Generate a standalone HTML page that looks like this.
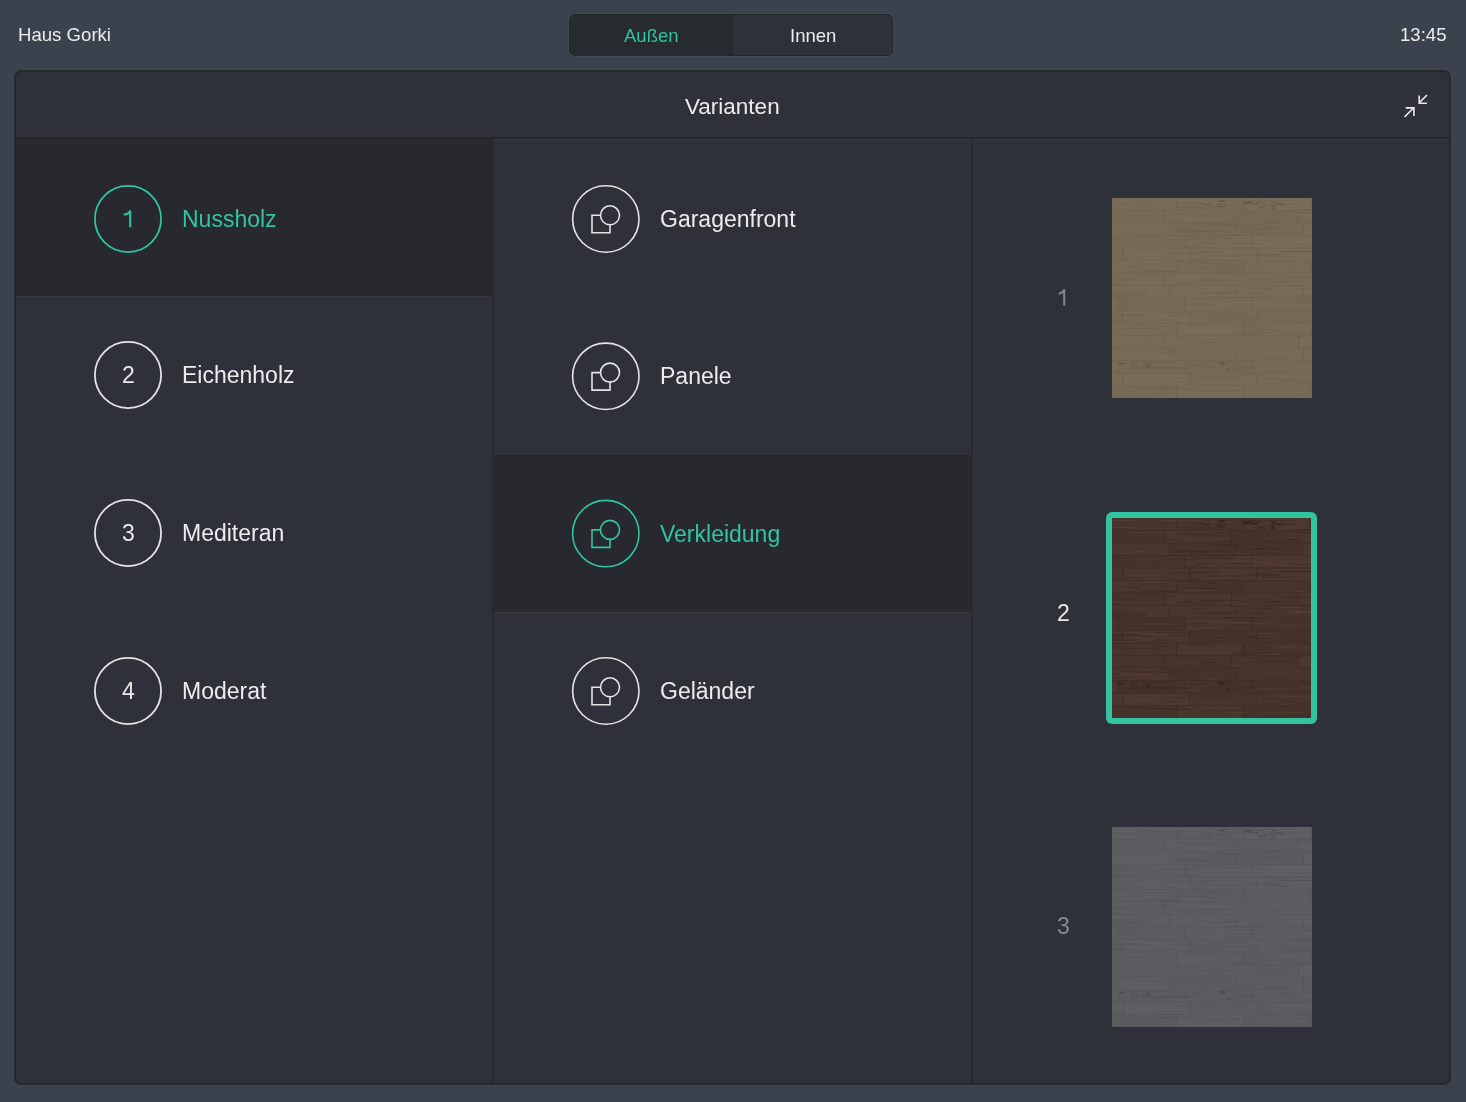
<!DOCTYPE html>
<html><head><meta charset="utf-8">
<style>
*{box-sizing:border-box;margin:0;padding:0}
html,body{width:1466px;height:1102px;overflow:hidden}
body{background:#3c424d;font-family:"Liberation Sans",sans-serif;color:#ececec;position:relative}
.a{position:absolute}
.t{position:absolute;white-space:nowrap;line-height:1;will-change:transform}
#title{left:18px;top:25.5px;font-size:18.6px}
#clock{left:1400px;top:25.5px;font-size:18.6px}
#seg{left:569px;top:14px;width:324px;height:42px;border:1.5px solid #23262a;border-radius:6px;background:#2d3139;overflow:hidden;box-shadow:0 0 0 1px #414856}
#seg .l{left:0;top:0;width:163px;height:100%;background:#272a2f;border-right:1px solid #23262a}
#panel{left:14px;top:70px;width:1437px;height:1015px;border:2px solid #25282c;border-radius:7px;background:#2e313a;box-shadow:0 0 0 1px #3f4552}
.dk{background:#24272b}
.lt{background:#383b44}
.sel{background:#27292e}
.circ{position:absolute;width:68px;height:68px;border-radius:50%;border:1.7px solid #e4e4e4}
.circ.g{border-color:#32c4a1}
.lab{position:absolute;will-change:transform;font-size:23px;line-height:1;white-space:nowrap}
.g{color:#32c4a1}
.num{position:absolute;will-change:transform;font-size:23px;line-height:1;white-space:nowrap;color:#e8e8e8}
.ic{position:absolute;left:0;top:0;overflow:visible}
.num.g{color:#32c4a1}
</style></head><body>
<div class="t" id="title">Haus Gorki</div>
<div class="a" id="seg"><div class="a l"></div>
<div class="t g" style="left:54px;top:12px;font-size:18.5px">Außen</div>
<div class="t" style="left:220px;top:12px;font-size:18.5px">Innen</div>
</div>
<div class="t" id="clock">13:45</div>

<div class="a" id="panel"></div>
<!-- header -->
<div class="t" style="left:684.5px;top:95.5px;font-size:22.5px">Varianten</div>
<div class="a dk" style="left:16px;top:137px;width:1433px;height:2px"></div>

<!-- column 1 -->
<div class="a sel" style="left:16px;top:139px;width:476px;height:157px"></div>
<div class="a lt" style="left:16px;top:296px;width:476px;height:1px"></div>
<!-- column separators -->
<div class="a" style="left:492px;top:139px;width:2px;height:944px;background:linear-gradient(90deg,#23262a 50%,#2a2d32 50%)"></div>
<div class="a" style="left:971px;top:139px;width:2px;height:944px;background:linear-gradient(90deg,#23262a 50%,#2a2d32 50%)"></div>
<!-- top highlight col2/3 -->
<div class="a lt" style="left:494px;top:139px;width:477px;height:1px"></div>
<div class="a lt" style="left:973px;top:139px;width:476px;height:1px"></div>
<!-- column 2 selected row -->
<div class="a sel" style="left:494px;top:455px;width:477px;height:157px"></div>
<div class="a" style="left:494px;top:455px;width:477px;height:1px;background:#23262a"></div>
<div class="a lt" style="left:494px;top:612px;width:477px;height:1px"></div>

<!-- col1 items -->
<div class="lab g" style="left:182px;top:208px">Nussholz</div>

<div class="num" style="left:121.5px;top:364px">2</div>
<div class="lab" style="left:182px;top:364px">Eichenholz</div>

<div class="num" style="left:121.5px;top:522px">3</div>
<div class="lab" style="left:182px;top:522px">Mediteran</div>

<div class="num" style="left:121.5px;top:680px">4</div>
<div class="lab" style="left:182px;top:680px">Moderat</div>

<!-- col2 items -->
<svg class="ic" width="1466" height="1102" viewBox="0 0 1466 1102">
  <g fill="none" stroke="#e4e4e4" stroke-width="1.8">
    <circle cx="128" cy="375" r="33.1"/>
    <circle cx="128" cy="533" r="33.1"/>
    <circle cx="128" cy="691" r="33.1"/>
  </g>
  <circle cx="128" cy="219" r="33.1" fill="none" stroke="#32c4a1" stroke-width="1.8"/>
  <path d="M130.2 227.3V210.3M130.2 210.6C129.4 213.2 127.3 214.4 123.8 214.6" fill="none" stroke="#32c4a1" stroke-width="2"/>
  <path d="M1064.2 305.6V289.2M1064.2 289.5C1063.4 292.1 1061.8 293.3 1058.7 293.5" fill="none" stroke="#86898e" stroke-width="2"/>
  <g fill="none" stroke="#e4e4e4" stroke-width="1.6">
    <circle cx="605.8" cy="219" r="33.2"/>
    <path d="M600.5 215.3H592V232.8H610V224.8"/><circle cx="610" cy="215.3" r="9.5"/>
    <circle cx="605.8" cy="376.3" r="33.2"/>
    <path d="M600.5 372.6H592V390.1H610V382.1"/><circle cx="610" cy="372.6" r="9.5"/>
    <circle cx="605.8" cy="691" r="33.2"/>
    <path d="M600.5 687.3H592V704.8H610V696.8"/><circle cx="610" cy="687.3" r="9.5"/>
  </g>
  <g fill="none" stroke="#32c4a1" stroke-width="1.6">
    <circle cx="605.8" cy="533.6" r="33.2"/>
    <path d="M600.5 529.9H592V547.4H610V539.4"/><circle cx="610" cy="529.9" r="9.5"/>
  </g>
  <g fill="none" stroke="#ececec" stroke-width="1.6" stroke-linecap="butt">
    <path d="M1427 95L1419.2 102.8M1419.2 95.5V103.3H1427"/>
    <path d="M1404.5 117L1413.5 108M1405.7 107.9H1413.9V116"/>
  </g>
</svg>
<div class="lab" style="left:660px;top:208px">Garagenfront</div>
<div class="lab" style="left:660px;top:365px">Panele</div>
<div class="lab g" style="left:660px;top:523px">Verkleidung</div>
<div class="lab" style="left:660px;top:680px">Geländer</div>

<!-- col3 swatches -->
<div class="num" style="left:1057px;top:602px">2</div>
<div class="num" style="left:1057px;top:915px;color:#86898e">3</div>

<svg width="0" height="0" style="position:absolute"><defs><filter id="bl"><feGaussianBlur stdDeviation="0.35"/></filter><g id="wood" filter="url(#bl)"><rect x="0.0" y="0.0" width="65.0" height="12.5" fill="#000" fill-opacity="0.002"/><rect x="65.0" y="0.0" width="67.0" height="12.5" fill="#fff" fill-opacity="0.001"/><rect x="132.0" y="0.0" width="67.0" height="12.5" fill="#fff" fill-opacity="0.010"/><rect x="199.0" y="0.0" width="1.0" height="12.5" fill="#000" fill-opacity="0.001"/><rect x="64.5" y="0.0" width="1" height="12.5" fill="#000" fill-opacity="0.07"/><rect x="131.5" y="0.0" width="1" height="12.5" fill="#000" fill-opacity="0.07"/><rect x="198.5" y="0.0" width="1" height="12.5" fill="#000" fill-opacity="0.07"/><rect x="103.4" y="6.3" width="14.8" height="0.8" fill="#000" fill-opacity="0.06"/><rect x="146.5" y="7.6" width="11.5" height="0.8" fill="#000" fill-opacity="0.05"/><rect x="150.0" y="2.0" width="33.7" height="0.8" fill="#000" fill-opacity="0.03"/><rect x="182.6" y="11.3" width="32.2" height="0.8" fill="#000" fill-opacity="0.06"/><rect x="-16.8" y="2.7" width="27.6" height="0.8" fill="#000" fill-opacity="0.03"/><rect x="30.8" y="3.0" width="9.1" height="0.8" fill="#000" fill-opacity="0.05"/><rect x="156.9" y="5.6" width="27.2" height="0.8" fill="#000" fill-opacity="0.06"/><rect x="119.1" y="6.2" width="24.9" height="0.8" fill="#000" fill-opacity="0.04"/><rect x="189.1" y="11.5" width="39.1" height="0.8" fill="#000" fill-opacity="0.07"/><rect x="28.2" y="4.3" width="18.7" height="0.8" fill="#000" fill-opacity="0.03"/><rect x="64.1" y="9.0" width="39.3" height="0.8" fill="#000" fill-opacity="0.05"/><rect x="157.9" y="11.1" width="8.0" height="0.8" fill="#000" fill-opacity="0.04"/><rect x="78.7" y="10.6" width="44.3" height="0.8" fill="#000" fill-opacity="0.05"/><rect x="112.2" y="1.8" width="36.8" height="0.8" fill="#000" fill-opacity="0.04"/><rect x="49.8" y="1.9" width="38.9" height="0.8" fill="#fff" fill-opacity="0.03"/><rect x="4.8" y="9.0" width="15.9" height="0.8" fill="#fff" fill-opacity="0.03"/><rect x="-7.4" y="2.1" width="33.5" height="0.8" fill="#fff" fill-opacity="0.03"/><rect x="97.5" y="2.9" width="22.3" height="0.8" fill="#fff" fill-opacity="0.03"/><rect x="0.0" y="12.5" width="53.0" height="12.5" fill="#000" fill-opacity="0.012"/><rect x="53.0" y="12.5" width="67.0" height="12.5" fill="#fff" fill-opacity="0.006"/><rect x="120.0" y="12.5" width="67.0" height="12.5" fill="#000" fill-opacity="0.015"/><rect x="187.0" y="12.5" width="13.0" height="12.5" fill="#fff" fill-opacity="0.003"/><rect x="0" y="12.0" width="200" height="1" fill="#000" fill-opacity="0.05"/><rect x="52.5" y="12.5" width="1" height="12.5" fill="#000" fill-opacity="0.07"/><rect x="119.5" y="12.5" width="1" height="12.5" fill="#000" fill-opacity="0.07"/><rect x="186.5" y="12.5" width="1" height="12.5" fill="#000" fill-opacity="0.07"/><rect x="68.4" y="14.7" width="15.9" height="0.8" fill="#000" fill-opacity="0.04"/><rect x="148.7" y="23.7" width="19.3" height="0.8" fill="#000" fill-opacity="0.07"/><rect x="62.8" y="15.7" width="39.6" height="0.8" fill="#000" fill-opacity="0.06"/><rect x="187.8" y="14.6" width="15.9" height="0.8" fill="#000" fill-opacity="0.04"/><rect x="49.1" y="21.6" width="19.0" height="0.8" fill="#000" fill-opacity="0.03"/><rect x="102.4" y="14.4" width="17.0" height="0.8" fill="#000" fill-opacity="0.06"/><rect x="75.2" y="17.4" width="43.5" height="0.8" fill="#000" fill-opacity="0.05"/><rect x="162.0" y="19.5" width="14.8" height="0.8" fill="#000" fill-opacity="0.04"/><rect x="151.7" y="23.0" width="17.2" height="0.8" fill="#000" fill-opacity="0.04"/><rect x="177.5" y="21.3" width="15.3" height="0.8" fill="#000" fill-opacity="0.08"/><rect x="106.7" y="22.8" width="23.6" height="0.8" fill="#000" fill-opacity="0.04"/><rect x="182.2" y="13.9" width="16.8" height="0.8" fill="#000" fill-opacity="0.07"/><rect x="153.0" y="16.2" width="30.1" height="0.8" fill="#000" fill-opacity="0.04"/><rect x="131.3" y="15.3" width="10.5" height="0.8" fill="#000" fill-opacity="0.04"/><rect x="159.0" y="19.4" width="27.7" height="0.8" fill="#fff" fill-opacity="0.03"/><rect x="172.6" y="16.4" width="14.5" height="0.8" fill="#fff" fill-opacity="0.03"/><rect x="36.5" y="13.7" width="22.3" height="0.8" fill="#fff" fill-opacity="0.03"/><rect x="17.0" y="14.1" width="19.8" height="0.8" fill="#fff" fill-opacity="0.03"/><rect x="0.0" y="25.0" width="57.5" height="12.5" fill="#fff" fill-opacity="0.002"/><rect x="57.5" y="25.0" width="67.0" height="12.5" fill="#000" fill-opacity="0.015"/><rect x="124.5" y="25.0" width="67.0" height="12.5" fill="#000" fill-opacity="0.006"/><rect x="191.5" y="25.0" width="8.5" height="12.5" fill="#fff" fill-opacity="0.009"/><rect x="0" y="24.5" width="200" height="1" fill="#000" fill-opacity="0.05"/><rect x="57.0" y="25.0" width="1" height="12.5" fill="#000" fill-opacity="0.07"/><rect x="124.0" y="25.0" width="1" height="12.5" fill="#000" fill-opacity="0.07"/><rect x="191.0" y="25.0" width="1" height="12.5" fill="#000" fill-opacity="0.07"/><rect x="118.0" y="36.3" width="33.6" height="0.8" fill="#000" fill-opacity="0.06"/><rect x="-12.6" y="27.5" width="8.7" height="0.8" fill="#000" fill-opacity="0.08"/><rect x="182.2" y="33.4" width="8.8" height="0.8" fill="#000" fill-opacity="0.06"/><rect x="133.4" y="31.1" width="19.8" height="0.8" fill="#000" fill-opacity="0.08"/><rect x="94.7" y="26.8" width="35.3" height="0.8" fill="#000" fill-opacity="0.08"/><rect x="127.8" y="33.7" width="37.4" height="0.8" fill="#000" fill-opacity="0.08"/><rect x="123.9" y="29.7" width="41.3" height="0.8" fill="#000" fill-opacity="0.07"/><rect x="146.0" y="30.4" width="39.9" height="0.8" fill="#000" fill-opacity="0.06"/><rect x="60.3" y="32.6" width="29.6" height="0.8" fill="#000" fill-opacity="0.06"/><rect x="114.3" y="26.8" width="44.8" height="0.8" fill="#000" fill-opacity="0.07"/><rect x="61.6" y="33.6" width="35.2" height="0.8" fill="#000" fill-opacity="0.06"/><rect x="156.1" y="30.6" width="11.1" height="0.8" fill="#000" fill-opacity="0.07"/><rect x="106.3" y="26.3" width="25.8" height="0.8" fill="#000" fill-opacity="0.04"/><rect x="84.4" y="33.3" width="30.7" height="0.8" fill="#000" fill-opacity="0.08"/><rect x="-17.6" y="28.7" width="17.6" height="0.8" fill="#fff" fill-opacity="0.03"/><rect x="22.5" y="33.1" width="13.4" height="0.8" fill="#fff" fill-opacity="0.03"/><rect x="118.6" y="35.5" width="22.1" height="0.8" fill="#fff" fill-opacity="0.03"/><rect x="48.7" y="35.4" width="29.3" height="0.8" fill="#fff" fill-opacity="0.03"/><rect x="0.0" y="37.5" width="6.3" height="12.5" fill="#000" fill-opacity="0.012"/><rect x="6.3" y="37.5" width="67.0" height="12.5" fill="#000" fill-opacity="0.003"/><rect x="73.3" y="37.5" width="67.0" height="12.5" fill="#fff" fill-opacity="0.007"/><rect x="140.3" y="37.5" width="59.7" height="12.5" fill="#fff" fill-opacity="0.010"/><rect x="0" y="37.0" width="200" height="1" fill="#000" fill-opacity="0.05"/><rect x="5.8" y="37.5" width="1" height="12.5" fill="#000" fill-opacity="0.07"/><rect x="72.8" y="37.5" width="1" height="12.5" fill="#000" fill-opacity="0.07"/><rect x="139.8" y="37.5" width="1" height="12.5" fill="#000" fill-opacity="0.07"/><rect x="60.7" y="47.7" width="29.6" height="0.8" fill="#000" fill-opacity="0.05"/><rect x="84.3" y="39.9" width="39.0" height="0.8" fill="#000" fill-opacity="0.07"/><rect x="179.5" y="46.0" width="18.2" height="0.8" fill="#000" fill-opacity="0.04"/><rect x="37.8" y="43.2" width="15.9" height="0.8" fill="#000" fill-opacity="0.05"/><rect x="83.7" y="45.1" width="19.7" height="0.8" fill="#000" fill-opacity="0.07"/><rect x="75.0" y="48.8" width="10.8" height="0.8" fill="#000" fill-opacity="0.03"/><rect x="-11.3" y="47.7" width="34.2" height="0.8" fill="#000" fill-opacity="0.06"/><rect x="146.2" y="41.7" width="8.7" height="0.8" fill="#000" fill-opacity="0.04"/><rect x="-14.8" y="43.3" width="38.7" height="0.8" fill="#000" fill-opacity="0.04"/><rect x="-10.1" y="40.0" width="31.3" height="0.8" fill="#000" fill-opacity="0.05"/><rect x="117.6" y="45.1" width="37.9" height="0.8" fill="#000" fill-opacity="0.08"/><rect x="21.9" y="45.7" width="25.6" height="0.8" fill="#000" fill-opacity="0.04"/><rect x="79.2" y="38.6" width="34.4" height="0.8" fill="#000" fill-opacity="0.04"/><rect x="52.6" y="41.4" width="33.8" height="0.8" fill="#000" fill-opacity="0.06"/><rect x="138.8" y="45.0" width="20.6" height="0.8" fill="#fff" fill-opacity="0.03"/><rect x="170.3" y="46.8" width="10.8" height="0.8" fill="#fff" fill-opacity="0.03"/><rect x="131.7" y="48.3" width="12.2" height="0.8" fill="#fff" fill-opacity="0.03"/><rect x="111.4" y="43.3" width="37.1" height="0.8" fill="#fff" fill-opacity="0.03"/><rect x="0.0" y="50.0" width="11.0" height="12.5" fill="#000" fill-opacity="0.005"/><rect x="11.0" y="50.0" width="67.0" height="12.5" fill="#fff" fill-opacity="0.002"/><rect x="78.0" y="50.0" width="67.0" height="12.5" fill="#fff" fill-opacity="0.009"/><rect x="145.0" y="50.0" width="55.0" height="12.5" fill="#fff" fill-opacity="0.007"/><rect x="0" y="49.5" width="200" height="1" fill="#000" fill-opacity="0.05"/><rect x="10.5" y="50.0" width="1" height="12.5" fill="#000" fill-opacity="0.07"/><rect x="77.5" y="50.0" width="1" height="12.5" fill="#000" fill-opacity="0.07"/><rect x="144.5" y="50.0" width="1" height="12.5" fill="#000" fill-opacity="0.07"/><rect x="77.4" y="60.9" width="32.1" height="0.8" fill="#000" fill-opacity="0.04"/><rect x="151.9" y="58.6" width="31.7" height="0.8" fill="#000" fill-opacity="0.07"/><rect x="169.0" y="53.2" width="44.3" height="0.8" fill="#000" fill-opacity="0.08"/><rect x="146.1" y="56.6" width="19.9" height="0.8" fill="#000" fill-opacity="0.08"/><rect x="53.2" y="60.0" width="11.1" height="0.8" fill="#000" fill-opacity="0.05"/><rect x="141.3" y="56.8" width="26.0" height="0.8" fill="#000" fill-opacity="0.03"/><rect x="-6.5" y="59.5" width="37.6" height="0.8" fill="#000" fill-opacity="0.04"/><rect x="145.5" y="54.5" width="13.2" height="0.8" fill="#000" fill-opacity="0.04"/><rect x="131.9" y="56.4" width="39.1" height="0.8" fill="#000" fill-opacity="0.06"/><rect x="83.4" y="60.9" width="43.1" height="0.8" fill="#000" fill-opacity="0.03"/><rect x="90.6" y="53.3" width="18.7" height="0.8" fill="#000" fill-opacity="0.07"/><rect x="89.8" y="57.7" width="39.2" height="0.8" fill="#000" fill-opacity="0.06"/><rect x="60.1" y="54.3" width="39.3" height="0.8" fill="#000" fill-opacity="0.08"/><rect x="158.7" y="53.2" width="43.8" height="0.8" fill="#000" fill-opacity="0.06"/><rect x="22.2" y="57.0" width="25.1" height="0.8" fill="#fff" fill-opacity="0.03"/><rect x="107.1" y="56.3" width="8.9" height="0.8" fill="#fff" fill-opacity="0.03"/><rect x="88.4" y="61.2" width="20.8" height="0.8" fill="#fff" fill-opacity="0.03"/><rect x="98.2" y="59.4" width="23.7" height="0.8" fill="#fff" fill-opacity="0.03"/><rect x="0.0" y="62.5" width="65.0" height="12.5" fill="#fff" fill-opacity="0.005"/><rect x="65.0" y="62.5" width="67.0" height="12.5" fill="#000" fill-opacity="0.017"/><rect x="132.0" y="62.5" width="67.0" height="12.5" fill="#fff" fill-opacity="0.001"/><rect x="199.0" y="62.5" width="1.0" height="12.5" fill="#000" fill-opacity="0.003"/><rect x="0" y="62.0" width="200" height="1" fill="#000" fill-opacity="0.05"/><rect x="64.5" y="62.5" width="1" height="12.5" fill="#000" fill-opacity="0.07"/><rect x="131.5" y="62.5" width="1" height="12.5" fill="#000" fill-opacity="0.07"/><rect x="198.5" y="62.5" width="1" height="12.5" fill="#000" fill-opacity="0.07"/><rect x="173.9" y="73.5" width="18.0" height="0.8" fill="#000" fill-opacity="0.05"/><rect x="71.1" y="64.8" width="38.2" height="0.8" fill="#000" fill-opacity="0.08"/><rect x="46.6" y="68.5" width="15.1" height="0.8" fill="#000" fill-opacity="0.06"/><rect x="7.2" y="73.2" width="36.8" height="0.8" fill="#000" fill-opacity="0.03"/><rect x="27.7" y="65.5" width="33.4" height="0.8" fill="#000" fill-opacity="0.05"/><rect x="110.2" y="67.2" width="11.9" height="0.8" fill="#000" fill-opacity="0.07"/><rect x="87.2" y="64.8" width="17.3" height="0.8" fill="#000" fill-opacity="0.04"/><rect x="71.7" y="69.1" width="21.9" height="0.8" fill="#000" fill-opacity="0.05"/><rect x="13.5" y="69.1" width="15.6" height="0.8" fill="#000" fill-opacity="0.06"/><rect x="91.2" y="70.2" width="39.5" height="0.8" fill="#000" fill-opacity="0.06"/><rect x="28.9" y="72.5" width="35.4" height="0.8" fill="#000" fill-opacity="0.07"/><rect x="46.3" y="73.0" width="19.7" height="0.8" fill="#000" fill-opacity="0.08"/><rect x="189.7" y="65.8" width="40.8" height="0.8" fill="#000" fill-opacity="0.04"/><rect x="132.6" y="66.0" width="17.6" height="0.8" fill="#000" fill-opacity="0.03"/><rect x="68.5" y="72.2" width="33.3" height="0.8" fill="#fff" fill-opacity="0.03"/><rect x="64.6" y="64.8" width="29.9" height="0.8" fill="#fff" fill-opacity="0.03"/><rect x="22.2" y="63.7" width="29.8" height="0.8" fill="#fff" fill-opacity="0.03"/><rect x="183.4" y="73.1" width="11.7" height="0.8" fill="#fff" fill-opacity="0.03"/><rect x="0.0" y="75.0" width="53.0" height="12.5" fill="#fff" fill-opacity="0.000"/><rect x="53.0" y="75.0" width="67.0" height="12.5" fill="#fff" fill-opacity="0.006"/><rect x="120.0" y="75.0" width="67.0" height="12.5" fill="#fff" fill-opacity="0.000"/><rect x="187.0" y="75.0" width="13.0" height="12.5" fill="#fff" fill-opacity="0.004"/><rect x="0" y="74.5" width="200" height="1" fill="#000" fill-opacity="0.05"/><rect x="52.5" y="75.0" width="1" height="12.5" fill="#000" fill-opacity="0.07"/><rect x="119.5" y="75.0" width="1" height="12.5" fill="#000" fill-opacity="0.07"/><rect x="186.5" y="75.0" width="1" height="12.5" fill="#000" fill-opacity="0.07"/><rect x="-5.2" y="78.0" width="11.9" height="0.8" fill="#000" fill-opacity="0.03"/><rect x="88.1" y="81.8" width="29.0" height="0.8" fill="#000" fill-opacity="0.04"/><rect x="22.8" y="77.9" width="39.1" height="0.8" fill="#000" fill-opacity="0.08"/><rect x="0.0" y="85.7" width="10.3" height="0.8" fill="#000" fill-opacity="0.08"/><rect x="140.6" y="80.9" width="20.1" height="0.8" fill="#000" fill-opacity="0.05"/><rect x="70.3" y="81.4" width="30.2" height="0.8" fill="#000" fill-opacity="0.03"/><rect x="157.3" y="83.4" width="14.7" height="0.8" fill="#000" fill-opacity="0.05"/><rect x="65.1" y="83.8" width="15.2" height="0.8" fill="#000" fill-opacity="0.04"/><rect x="-16.8" y="81.4" width="41.0" height="0.8" fill="#000" fill-opacity="0.07"/><rect x="160.8" y="83.4" width="31.3" height="0.8" fill="#000" fill-opacity="0.05"/><rect x="85.9" y="82.3" width="44.4" height="0.8" fill="#000" fill-opacity="0.07"/><rect x="171.4" y="78.7" width="35.5" height="0.8" fill="#000" fill-opacity="0.07"/><rect x="65.2" y="84.6" width="41.2" height="0.8" fill="#000" fill-opacity="0.07"/><rect x="141.1" y="83.3" width="36.3" height="0.8" fill="#000" fill-opacity="0.05"/><rect x="-5.2" y="83.6" width="18.9" height="0.8" fill="#fff" fill-opacity="0.03"/><rect x="-17.8" y="80.9" width="19.4" height="0.8" fill="#fff" fill-opacity="0.03"/><rect x="111.0" y="82.7" width="15.4" height="0.8" fill="#fff" fill-opacity="0.03"/><rect x="119.9" y="85.9" width="18.8" height="0.8" fill="#fff" fill-opacity="0.03"/><rect x="0.0" y="87.5" width="57.5" height="12.5" fill="#fff" fill-opacity="0.004"/><rect x="57.5" y="87.5" width="67.0" height="12.5" fill="#fff" fill-opacity="0.002"/><rect x="124.5" y="87.5" width="67.0" height="12.5" fill="#fff" fill-opacity="0.001"/><rect x="191.5" y="87.5" width="8.5" height="12.5" fill="#000" fill-opacity="0.004"/><rect x="0" y="87.0" width="200" height="1" fill="#000" fill-opacity="0.05"/><rect x="57.0" y="87.5" width="1" height="12.5" fill="#000" fill-opacity="0.07"/><rect x="124.0" y="87.5" width="1" height="12.5" fill="#000" fill-opacity="0.07"/><rect x="191.0" y="87.5" width="1" height="12.5" fill="#000" fill-opacity="0.07"/><rect x="114.9" y="99.0" width="33.9" height="0.8" fill="#000" fill-opacity="0.07"/><rect x="-15.2" y="98.8" width="30.8" height="0.8" fill="#000" fill-opacity="0.07"/><rect x="64.3" y="91.2" width="9.9" height="0.8" fill="#000" fill-opacity="0.04"/><rect x="0.7" y="92.4" width="17.3" height="0.8" fill="#000" fill-opacity="0.08"/><rect x="86.6" y="94.3" width="43.8" height="0.8" fill="#000" fill-opacity="0.06"/><rect x="114.0" y="98.9" width="38.0" height="0.8" fill="#000" fill-opacity="0.03"/><rect x="139.4" y="94.8" width="9.7" height="0.8" fill="#000" fill-opacity="0.08"/><rect x="79.1" y="90.2" width="14.3" height="0.8" fill="#000" fill-opacity="0.05"/><rect x="-7.7" y="94.9" width="43.0" height="0.8" fill="#000" fill-opacity="0.05"/><rect x="105.5" y="94.0" width="21.5" height="0.8" fill="#000" fill-opacity="0.04"/><rect x="97.7" y="95.4" width="18.5" height="0.8" fill="#000" fill-opacity="0.07"/><rect x="-17.1" y="91.6" width="17.1" height="0.8" fill="#000" fill-opacity="0.03"/><rect x="138.5" y="90.1" width="22.4" height="0.8" fill="#000" fill-opacity="0.07"/><rect x="-9.5" y="96.4" width="44.6" height="0.8" fill="#000" fill-opacity="0.08"/><rect x="170.2" y="89.3" width="21.7" height="0.8" fill="#fff" fill-opacity="0.03"/><rect x="184.4" y="93.5" width="15.8" height="0.8" fill="#fff" fill-opacity="0.03"/><rect x="176.8" y="94.0" width="31.1" height="0.8" fill="#fff" fill-opacity="0.03"/><rect x="185.6" y="93.4" width="34.1" height="0.8" fill="#fff" fill-opacity="0.03"/><rect x="0.0" y="100.0" width="6.3" height="12.5" fill="#fff" fill-opacity="0.002"/><rect x="6.3" y="100.0" width="67.0" height="12.5" fill="#000" fill-opacity="0.015"/><rect x="73.3" y="100.0" width="67.0" height="12.5" fill="#fff" fill-opacity="0.003"/><rect x="140.3" y="100.0" width="59.7" height="12.5" fill="#000" fill-opacity="0.002"/><rect x="0" y="99.5" width="200" height="1" fill="#000" fill-opacity="0.05"/><rect x="5.8" y="100.0" width="1" height="12.5" fill="#000" fill-opacity="0.07"/><rect x="72.8" y="100.0" width="1" height="12.5" fill="#000" fill-opacity="0.07"/><rect x="139.8" y="100.0" width="1" height="12.5" fill="#000" fill-opacity="0.07"/><rect x="-9.1" y="103.1" width="27.5" height="0.8" fill="#000" fill-opacity="0.04"/><rect x="120.3" y="105.7" width="24.9" height="0.8" fill="#000" fill-opacity="0.04"/><rect x="68.1" y="107.1" width="36.8" height="0.8" fill="#000" fill-opacity="0.06"/><rect x="180.1" y="111.5" width="35.2" height="0.8" fill="#000" fill-opacity="0.04"/><rect x="167.5" y="102.2" width="37.0" height="0.8" fill="#000" fill-opacity="0.06"/><rect x="37.0" y="104.8" width="33.3" height="0.8" fill="#000" fill-opacity="0.06"/><rect x="113.0" y="107.2" width="35.9" height="0.8" fill="#000" fill-opacity="0.04"/><rect x="185.7" y="103.6" width="41.9" height="0.8" fill="#000" fill-opacity="0.07"/><rect x="-7.2" y="101.4" width="18.0" height="0.8" fill="#000" fill-opacity="0.05"/><rect x="1.5" y="107.5" width="28.0" height="0.8" fill="#000" fill-opacity="0.03"/><rect x="122.0" y="101.9" width="28.4" height="0.8" fill="#000" fill-opacity="0.06"/><rect x="80.5" y="104.9" width="15.8" height="0.8" fill="#000" fill-opacity="0.05"/><rect x="156.1" y="108.8" width="10.8" height="0.8" fill="#000" fill-opacity="0.04"/><rect x="111.0" y="109.5" width="36.4" height="0.8" fill="#000" fill-opacity="0.04"/><rect x="34.2" y="105.5" width="33.9" height="0.8" fill="#fff" fill-opacity="0.03"/><rect x="117.3" y="104.9" width="39.7" height="0.8" fill="#fff" fill-opacity="0.03"/><rect x="95.2" y="104.4" width="31.9" height="0.8" fill="#fff" fill-opacity="0.03"/><rect x="69.8" y="110.7" width="19.8" height="0.8" fill="#fff" fill-opacity="0.03"/><rect x="0.0" y="112.5" width="11.0" height="12.5" fill="#000" fill-opacity="0.016"/><rect x="11.0" y="112.5" width="67.0" height="12.5" fill="#fff" fill-opacity="0.009"/><rect x="78.0" y="112.5" width="67.0" height="12.5" fill="#000" fill-opacity="0.017"/><rect x="145.0" y="112.5" width="55.0" height="12.5" fill="#000" fill-opacity="0.017"/><rect x="0" y="112.0" width="200" height="1" fill="#000" fill-opacity="0.05"/><rect x="10.5" y="112.5" width="1" height="12.5" fill="#000" fill-opacity="0.07"/><rect x="77.5" y="112.5" width="1" height="12.5" fill="#000" fill-opacity="0.07"/><rect x="144.5" y="112.5" width="1" height="12.5" fill="#000" fill-opacity="0.07"/><rect x="81.8" y="119.4" width="33.4" height="0.8" fill="#000" fill-opacity="0.04"/><rect x="-4.0" y="121.6" width="15.9" height="0.8" fill="#000" fill-opacity="0.06"/><rect x="43.8" y="114.4" width="34.8" height="0.8" fill="#000" fill-opacity="0.06"/><rect x="10.0" y="116.5" width="21.2" height="0.8" fill="#000" fill-opacity="0.07"/><rect x="4.7" y="117.3" width="34.2" height="0.8" fill="#000" fill-opacity="0.06"/><rect x="177.4" y="123.1" width="41.8" height="0.8" fill="#000" fill-opacity="0.05"/><rect x="44.0" y="121.9" width="19.8" height="0.8" fill="#000" fill-opacity="0.05"/><rect x="167.9" y="123.3" width="17.2" height="0.8" fill="#000" fill-opacity="0.05"/><rect x="56.3" y="117.3" width="22.6" height="0.8" fill="#000" fill-opacity="0.05"/><rect x="98.4" y="115.5" width="37.5" height="0.8" fill="#000" fill-opacity="0.06"/><rect x="98.2" y="122.3" width="14.5" height="0.8" fill="#000" fill-opacity="0.07"/><rect x="39.1" y="122.7" width="8.8" height="0.8" fill="#000" fill-opacity="0.06"/><rect x="99.2" y="119.2" width="43.8" height="0.8" fill="#000" fill-opacity="0.06"/><rect x="-6.5" y="121.9" width="28.2" height="0.8" fill="#000" fill-opacity="0.07"/><rect x="-2.8" y="114.4" width="31.6" height="0.8" fill="#fff" fill-opacity="0.03"/><rect x="-2.2" y="122.9" width="28.3" height="0.8" fill="#fff" fill-opacity="0.03"/><rect x="136.6" y="115.0" width="28.8" height="0.8" fill="#fff" fill-opacity="0.03"/><rect x="26.3" y="116.1" width="32.5" height="0.8" fill="#fff" fill-opacity="0.03"/><rect x="0.0" y="125.0" width="65.0" height="12.5" fill="#fff" fill-opacity="0.001"/><rect x="65.0" y="125.0" width="67.0" height="12.5" fill="#fff" fill-opacity="0.006"/><rect x="132.0" y="125.0" width="67.0" height="12.5" fill="#000" fill-opacity="0.004"/><rect x="199.0" y="125.0" width="1.0" height="12.5" fill="#000" fill-opacity="0.006"/><rect x="0" y="124.5" width="200" height="1" fill="#000" fill-opacity="0.05"/><rect x="64.5" y="125.0" width="1" height="12.5" fill="#000" fill-opacity="0.07"/><rect x="131.5" y="125.0" width="1" height="12.5" fill="#000" fill-opacity="0.07"/><rect x="198.5" y="125.0" width="1" height="12.5" fill="#000" fill-opacity="0.07"/><rect x="121.2" y="136.2" width="26.3" height="0.8" fill="#000" fill-opacity="0.06"/><rect x="128.7" y="133.6" width="41.9" height="0.8" fill="#000" fill-opacity="0.05"/><rect x="120.0" y="134.7" width="39.6" height="0.8" fill="#000" fill-opacity="0.07"/><rect x="166.6" y="134.8" width="43.4" height="0.8" fill="#000" fill-opacity="0.06"/><rect x="129.1" y="131.5" width="37.7" height="0.8" fill="#000" fill-opacity="0.05"/><rect x="10.7" y="130.4" width="35.4" height="0.8" fill="#000" fill-opacity="0.08"/><rect x="15.2" y="129.9" width="15.6" height="0.8" fill="#000" fill-opacity="0.05"/><rect x="183.6" y="129.1" width="10.2" height="0.8" fill="#000" fill-opacity="0.05"/><rect x="116.1" y="127.2" width="36.7" height="0.8" fill="#000" fill-opacity="0.04"/><rect x="76.3" y="126.7" width="29.6" height="0.8" fill="#000" fill-opacity="0.08"/><rect x="2.8" y="126.4" width="14.8" height="0.8" fill="#000" fill-opacity="0.04"/><rect x="130.6" y="128.5" width="30.0" height="0.8" fill="#000" fill-opacity="0.04"/><rect x="39.0" y="127.9" width="14.4" height="0.8" fill="#000" fill-opacity="0.07"/><rect x="95.1" y="129.3" width="38.2" height="0.8" fill="#000" fill-opacity="0.05"/><rect x="166.4" y="128.7" width="37.3" height="0.8" fill="#fff" fill-opacity="0.03"/><rect x="94.9" y="129.6" width="38.6" height="0.8" fill="#fff" fill-opacity="0.03"/><rect x="26.4" y="131.1" width="9.6" height="0.8" fill="#fff" fill-opacity="0.03"/><rect x="148.3" y="135.9" width="20.3" height="0.8" fill="#fff" fill-opacity="0.03"/><rect x="0.0" y="137.5" width="53.0" height="12.5" fill="#fff" fill-opacity="0.001"/><rect x="53.0" y="137.5" width="67.0" height="12.5" fill="#fff" fill-opacity="0.000"/><rect x="120.0" y="137.5" width="67.0" height="12.5" fill="#000" fill-opacity="0.009"/><rect x="187.0" y="137.5" width="13.0" height="12.5" fill="#fff" fill-opacity="0.012"/><rect x="0" y="137.0" width="200" height="1" fill="#000" fill-opacity="0.05"/><rect x="52.5" y="137.5" width="1" height="12.5" fill="#000" fill-opacity="0.07"/><rect x="119.5" y="137.5" width="1" height="12.5" fill="#000" fill-opacity="0.07"/><rect x="186.5" y="137.5" width="1" height="12.5" fill="#000" fill-opacity="0.07"/><rect x="29.9" y="145.4" width="8.4" height="0.8" fill="#000" fill-opacity="0.05"/><rect x="147.3" y="142.4" width="34.4" height="0.8" fill="#000" fill-opacity="0.06"/><rect x="13.0" y="140.2" width="19.9" height="0.8" fill="#000" fill-opacity="0.04"/><rect x="88.4" y="147.6" width="31.6" height="0.8" fill="#000" fill-opacity="0.08"/><rect x="92.3" y="141.3" width="13.6" height="0.8" fill="#000" fill-opacity="0.07"/><rect x="152.5" y="138.5" width="39.3" height="0.8" fill="#000" fill-opacity="0.07"/><rect x="36.7" y="139.4" width="34.5" height="0.8" fill="#000" fill-opacity="0.03"/><rect x="78.4" y="143.5" width="43.4" height="0.8" fill="#000" fill-opacity="0.06"/><rect x="43.8" y="147.5" width="37.2" height="0.8" fill="#000" fill-opacity="0.05"/><rect x="-0.9" y="148.1" width="38.6" height="0.8" fill="#000" fill-opacity="0.04"/><rect x="90.4" y="144.2" width="13.8" height="0.8" fill="#000" fill-opacity="0.07"/><rect x="45.3" y="141.8" width="10.8" height="0.8" fill="#000" fill-opacity="0.05"/><rect x="130.2" y="143.4" width="21.3" height="0.8" fill="#000" fill-opacity="0.06"/><rect x="62.8" y="139.6" width="25.1" height="0.8" fill="#000" fill-opacity="0.08"/><rect x="117.3" y="147.2" width="8.4" height="0.8" fill="#fff" fill-opacity="0.03"/><rect x="129.1" y="142.5" width="15.6" height="0.8" fill="#fff" fill-opacity="0.03"/><rect x="76.2" y="144.4" width="8.3" height="0.8" fill="#fff" fill-opacity="0.03"/><rect x="147.9" y="148.9" width="14.6" height="0.8" fill="#fff" fill-opacity="0.03"/><rect x="0.0" y="150.0" width="57.5" height="12.5" fill="#fff" fill-opacity="0.003"/><rect x="57.5" y="150.0" width="67.0" height="12.5" fill="#000" fill-opacity="0.008"/><rect x="124.5" y="150.0" width="67.0" height="12.5" fill="#000" fill-opacity="0.005"/><rect x="191.5" y="150.0" width="8.5" height="12.5" fill="#fff" fill-opacity="0.001"/><rect x="0" y="149.5" width="200" height="1" fill="#000" fill-opacity="0.05"/><rect x="57.0" y="150.0" width="1" height="12.5" fill="#000" fill-opacity="0.07"/><rect x="124.0" y="150.0" width="1" height="12.5" fill="#000" fill-opacity="0.07"/><rect x="191.0" y="150.0" width="1" height="12.5" fill="#000" fill-opacity="0.07"/><rect x="50.9" y="154.1" width="22.5" height="0.8" fill="#000" fill-opacity="0.06"/><rect x="22.0" y="153.7" width="35.1" height="0.8" fill="#000" fill-opacity="0.05"/><rect x="98.2" y="160.9" width="34.8" height="0.8" fill="#000" fill-opacity="0.05"/><rect x="-0.6" y="159.7" width="13.2" height="0.8" fill="#000" fill-opacity="0.03"/><rect x="128.7" y="158.1" width="14.7" height="0.8" fill="#000" fill-opacity="0.05"/><rect x="104.5" y="159.8" width="11.3" height="0.8" fill="#000" fill-opacity="0.04"/><rect x="6.1" y="152.6" width="23.1" height="0.8" fill="#000" fill-opacity="0.03"/><rect x="69.7" y="160.7" width="26.9" height="0.8" fill="#000" fill-opacity="0.06"/><rect x="152.4" y="159.1" width="22.3" height="0.8" fill="#000" fill-opacity="0.05"/><rect x="-16.8" y="155.3" width="22.8" height="0.8" fill="#000" fill-opacity="0.06"/><rect x="145.8" y="161.3" width="32.4" height="0.8" fill="#000" fill-opacity="0.06"/><rect x="49.5" y="151.2" width="20.7" height="0.8" fill="#000" fill-opacity="0.06"/><rect x="59.3" y="152.1" width="26.8" height="0.8" fill="#000" fill-opacity="0.07"/><rect x="108.4" y="159.7" width="13.9" height="0.8" fill="#000" fill-opacity="0.07"/><rect x="95.1" y="160.5" width="19.3" height="0.8" fill="#fff" fill-opacity="0.03"/><rect x="9.8" y="156.3" width="30.8" height="0.8" fill="#fff" fill-opacity="0.03"/><rect x="88.4" y="161.4" width="30.9" height="0.8" fill="#fff" fill-opacity="0.03"/><rect x="21.4" y="159.8" width="38.2" height="0.8" fill="#fff" fill-opacity="0.03"/><rect x="0.0" y="162.5" width="6.3" height="12.5" fill="#fff" fill-opacity="0.003"/><rect x="6.3" y="162.5" width="67.0" height="12.5" fill="#000" fill-opacity="0.012"/><rect x="73.3" y="162.5" width="67.0" height="12.5" fill="#000" fill-opacity="0.017"/><rect x="140.3" y="162.5" width="59.7" height="12.5" fill="#000" fill-opacity="0.010"/><rect x="0" y="162.0" width="200" height="1" fill="#000" fill-opacity="0.05"/><rect x="5.8" y="162.5" width="1" height="12.5" fill="#000" fill-opacity="0.07"/><rect x="72.8" y="162.5" width="1" height="12.5" fill="#000" fill-opacity="0.07"/><rect x="139.8" y="162.5" width="1" height="12.5" fill="#000" fill-opacity="0.07"/><rect x="126.4" y="169.6" width="20.2" height="0.8" fill="#000" fill-opacity="0.08"/><rect x="77.2" y="167.3" width="12.6" height="0.8" fill="#000" fill-opacity="0.08"/><rect x="169.9" y="164.9" width="28.1" height="0.8" fill="#000" fill-opacity="0.06"/><rect x="35.5" y="169.4" width="41.6" height="0.8" fill="#000" fill-opacity="0.08"/><rect x="106.3" y="172.1" width="12.5" height="0.8" fill="#000" fill-opacity="0.07"/><rect x="168.4" y="166.5" width="16.9" height="0.8" fill="#000" fill-opacity="0.06"/><rect x="19.0" y="172.2" width="28.3" height="0.8" fill="#000" fill-opacity="0.03"/><rect x="17.8" y="163.8" width="44.5" height="0.8" fill="#000" fill-opacity="0.08"/><rect x="44.6" y="170.4" width="32.8" height="0.8" fill="#000" fill-opacity="0.07"/><rect x="104.3" y="167.5" width="37.7" height="0.8" fill="#000" fill-opacity="0.03"/><rect x="78.3" y="165.6" width="13.3" height="0.8" fill="#000" fill-opacity="0.05"/><rect x="16.5" y="169.5" width="27.2" height="0.8" fill="#000" fill-opacity="0.04"/><rect x="49.7" y="169.5" width="31.7" height="0.8" fill="#000" fill-opacity="0.03"/><rect x="10.4" y="170.5" width="43.5" height="0.8" fill="#000" fill-opacity="0.06"/><rect x="66.4" y="168.4" width="28.0" height="0.8" fill="#fff" fill-opacity="0.03"/><rect x="139.2" y="170.7" width="32.1" height="0.8" fill="#fff" fill-opacity="0.03"/><rect x="188.9" y="168.6" width="34.8" height="0.8" fill="#fff" fill-opacity="0.03"/><rect x="65.9" y="172.5" width="21.9" height="0.8" fill="#fff" fill-opacity="0.03"/><rect x="0.0" y="175.0" width="11.0" height="12.5" fill="#fff" fill-opacity="0.002"/><rect x="11.0" y="175.0" width="67.0" height="12.5" fill="#fff" fill-opacity="0.010"/><rect x="78.0" y="175.0" width="67.0" height="12.5" fill="#fff" fill-opacity="0.001"/><rect x="145.0" y="175.0" width="55.0" height="12.5" fill="#fff" fill-opacity="0.001"/><rect x="0" y="174.5" width="200" height="1" fill="#000" fill-opacity="0.05"/><rect x="10.5" y="175.0" width="1" height="12.5" fill="#000" fill-opacity="0.07"/><rect x="77.5" y="175.0" width="1" height="12.5" fill="#000" fill-opacity="0.07"/><rect x="144.5" y="175.0" width="1" height="12.5" fill="#000" fill-opacity="0.07"/><rect x="169.9" y="180.5" width="19.9" height="0.8" fill="#000" fill-opacity="0.03"/><rect x="169.0" y="183.6" width="35.1" height="0.8" fill="#000" fill-opacity="0.06"/><rect x="44.0" y="183.9" width="30.0" height="0.8" fill="#000" fill-opacity="0.03"/><rect x="73.9" y="177.3" width="26.6" height="0.8" fill="#000" fill-opacity="0.05"/><rect x="125.9" y="176.5" width="27.5" height="0.8" fill="#000" fill-opacity="0.04"/><rect x="63.1" y="179.2" width="16.7" height="0.8" fill="#000" fill-opacity="0.03"/><rect x="183.0" y="185.6" width="32.6" height="0.8" fill="#000" fill-opacity="0.07"/><rect x="149.1" y="180.4" width="16.2" height="0.8" fill="#000" fill-opacity="0.07"/><rect x="169.7" y="182.0" width="11.6" height="0.8" fill="#000" fill-opacity="0.07"/><rect x="92.9" y="177.3" width="43.2" height="0.8" fill="#000" fill-opacity="0.03"/><rect x="42.8" y="178.6" width="20.0" height="0.8" fill="#000" fill-opacity="0.03"/><rect x="151.2" y="185.4" width="22.7" height="0.8" fill="#000" fill-opacity="0.05"/><rect x="-10.4" y="182.1" width="9.2" height="0.8" fill="#000" fill-opacity="0.07"/><rect x="84.7" y="179.2" width="42.6" height="0.8" fill="#000" fill-opacity="0.08"/><rect x="23.4" y="181.0" width="17.5" height="0.8" fill="#fff" fill-opacity="0.03"/><rect x="168.3" y="185.7" width="14.3" height="0.8" fill="#fff" fill-opacity="0.03"/><rect x="54.4" y="184.8" width="23.1" height="0.8" fill="#fff" fill-opacity="0.03"/><rect x="164.7" y="177.8" width="39.9" height="0.8" fill="#fff" fill-opacity="0.03"/><rect x="0.0" y="187.5" width="65.0" height="12.5" fill="#000" fill-opacity="0.012"/><rect x="65.0" y="187.5" width="67.0" height="12.5" fill="#fff" fill-opacity="0.003"/><rect x="132.0" y="187.5" width="67.0" height="12.5" fill="#000" fill-opacity="0.012"/><rect x="199.0" y="187.5" width="1.0" height="12.5" fill="#fff" fill-opacity="0.009"/><rect x="0" y="187.0" width="200" height="1" fill="#000" fill-opacity="0.05"/><rect x="64.5" y="187.5" width="1" height="12.5" fill="#000" fill-opacity="0.07"/><rect x="131.5" y="187.5" width="1" height="12.5" fill="#000" fill-opacity="0.07"/><rect x="198.5" y="187.5" width="1" height="12.5" fill="#000" fill-opacity="0.07"/><rect x="2.3" y="189.0" width="34.9" height="0.8" fill="#000" fill-opacity="0.05"/><rect x="162.6" y="198.0" width="34.4" height="0.8" fill="#000" fill-opacity="0.04"/><rect x="176.9" y="195.8" width="24.5" height="0.8" fill="#000" fill-opacity="0.03"/><rect x="44.5" y="190.8" width="34.3" height="0.8" fill="#000" fill-opacity="0.04"/><rect x="29.4" y="190.4" width="32.6" height="0.8" fill="#000" fill-opacity="0.07"/><rect x="119.0" y="192.4" width="40.7" height="0.8" fill="#000" fill-opacity="0.06"/><rect x="43.2" y="190.9" width="42.3" height="0.8" fill="#000" fill-opacity="0.06"/><rect x="114.4" y="191.4" width="11.3" height="0.8" fill="#000" fill-opacity="0.08"/><rect x="90.9" y="193.1" width="27.6" height="0.8" fill="#000" fill-opacity="0.03"/><rect x="39.8" y="194.8" width="17.3" height="0.8" fill="#000" fill-opacity="0.07"/><rect x="39.9" y="189.4" width="36.0" height="0.8" fill="#000" fill-opacity="0.04"/><rect x="95.1" y="191.4" width="14.9" height="0.8" fill="#000" fill-opacity="0.07"/><rect x="-12.9" y="198.9" width="25.1" height="0.8" fill="#000" fill-opacity="0.07"/><rect x="175.1" y="192.5" width="26.5" height="0.8" fill="#000" fill-opacity="0.04"/><rect x="115.4" y="194.3" width="19.5" height="0.8" fill="#fff" fill-opacity="0.03"/><rect x="144.4" y="195.4" width="24.5" height="0.8" fill="#fff" fill-opacity="0.03"/><rect x="157.5" y="193.8" width="29.9" height="0.8" fill="#fff" fill-opacity="0.03"/><rect x="179.8" y="194.0" width="13.6" height="0.8" fill="#fff" fill-opacity="0.03"/><ellipse cx="109.8" cy="3.3" rx="3.8" ry="0.6" fill="#000" fill-opacity="0.10"/><ellipse cx="109.6" cy="8.3" rx="4.4" ry="0.6" fill="#000" fill-opacity="0.10"/><ellipse cx="94.2" cy="6.6" rx="3.5" ry="0.5" fill="#000" fill-opacity="0.11"/><ellipse cx="108.0" cy="6.6" rx="4.6" ry="0.6" fill="#000" fill-opacity="0.07"/><ellipse cx="88.5" cy="6.0" rx="3.3" ry="0.8" fill="#000" fill-opacity="0.08"/><ellipse cx="110.4" cy="2.6" rx="4.7" ry="0.8" fill="#000" fill-opacity="0.11"/><ellipse cx="110.2" cy="3.9" rx="2.4" ry="0.7" fill="#000" fill-opacity="0.06"/><ellipse cx="96.8" cy="7.0" rx="3.6" ry="0.7" fill="#000" fill-opacity="0.11"/><ellipse cx="90.5" cy="8.6" rx="2.5" ry="0.7" fill="#000" fill-opacity="0.07"/><ellipse cx="107.3" cy="8.6" rx="4.4" ry="0.5" fill="#000" fill-opacity="0.10"/><ellipse cx="147.1" cy="3.7" rx="4.9" ry="0.5" fill="#000" fill-opacity="0.10"/><ellipse cx="161.4" cy="9.9" rx="2.4" ry="0.8" fill="#000" fill-opacity="0.13"/><ellipse cx="135.4" cy="3.9" rx="4.7" ry="0.6" fill="#000" fill-opacity="0.10"/><ellipse cx="144.7" cy="5.4" rx="2.2" ry="0.5" fill="#000" fill-opacity="0.15"/><ellipse cx="161.5" cy="7.9" rx="2.7" ry="0.7" fill="#000" fill-opacity="0.11"/><ellipse cx="142.7" cy="5.7" rx="4.8" ry="0.7" fill="#000" fill-opacity="0.09"/><ellipse cx="169.3" cy="6.9" rx="2.1" ry="0.7" fill="#000" fill-opacity="0.12"/><ellipse cx="136.1" cy="4.7" rx="4.1" ry="1.0" fill="#000" fill-opacity="0.11"/><ellipse cx="165.9" cy="5.7" rx="3.2" ry="1.0" fill="#000" fill-opacity="0.09"/><ellipse cx="162.1" cy="3.7" rx="3.0" ry="0.6" fill="#000" fill-opacity="0.11"/><ellipse cx="139.9" cy="3.6" rx="2.6" ry="0.8" fill="#000" fill-opacity="0.09"/><ellipse cx="150.1" cy="9.9" rx="4.0" ry="1.0" fill="#000" fill-opacity="0.08"/><ellipse cx="23.3" cy="164.6" rx="4.1" ry="0.7" fill="#000" fill-opacity="0.08"/><ellipse cx="8.7" cy="165.5" rx="2.8" ry="0.7" fill="#000" fill-opacity="0.14"/><ellipse cx="36.6" cy="166.1" rx="3.1" ry="0.6" fill="#000" fill-opacity="0.14"/><ellipse cx="22.4" cy="170.1" rx="4.2" ry="1.0" fill="#000" fill-opacity="0.06"/><ellipse cx="20.9" cy="167.1" rx="2.2" ry="1.0" fill="#000" fill-opacity="0.09"/><ellipse cx="38.8" cy="168.2" rx="2.2" ry="0.7" fill="#000" fill-opacity="0.08"/><ellipse cx="9.6" cy="165.2" rx="3.8" ry="0.5" fill="#000" fill-opacity="0.09"/><ellipse cx="25.0" cy="168.4" rx="2.4" ry="0.9" fill="#000" fill-opacity="0.08"/><ellipse cx="37.0" cy="169.3" rx="2.4" ry="0.6" fill="#000" fill-opacity="0.09"/><ellipse cx="36.5" cy="167.2" rx="3.2" ry="1.0" fill="#000" fill-opacity="0.08"/><ellipse cx="19.7" cy="166.8" rx="2.6" ry="0.5" fill="#000" fill-opacity="0.06"/><ellipse cx="33.2" cy="168.5" rx="4.4" ry="1.1" fill="#000" fill-opacity="0.09"/><ellipse cx="116.8" cy="171.4" rx="2.6" ry="0.9" fill="#000" fill-opacity="0.12"/><ellipse cx="124.7" cy="170.9" rx="2.7" ry="0.9" fill="#000" fill-opacity="0.07"/><ellipse cx="110.0" cy="167.1" rx="2.2" ry="0.7" fill="#000" fill-opacity="0.09"/><ellipse cx="111.9" cy="166.2" rx="2.5" ry="0.7" fill="#000" fill-opacity="0.10"/><ellipse cx="102.7" cy="169.3" rx="2.7" ry="0.6" fill="#000" fill-opacity="0.09"/><ellipse cx="109.8" cy="165.2" rx="3.7" ry="0.9" fill="#000" fill-opacity="0.11"/><ellipse cx="117.6" cy="164.2" rx="3.2" ry="0.7" fill="#000" fill-opacity="0.07"/><ellipse cx="109.3" cy="164.4" rx="3.5" ry="0.9" fill="#000" fill-opacity="0.10"/></g></defs></svg>
<svg class="a" id="sw1" style="left:1112px;top:198px" width="200" height="200" viewBox="0 0 200 200"><rect width="200" height="200" fill="#786b55"/><use href="#wood"/></svg>
<div class="a" style="left:1106px;top:512px;width:211px;height:212px;border-radius:6px;background:#32c4a1"></div>
<svg class="a" id="sw2" style="left:1112px;top:518px" width="199" height="200" viewBox="0 0 200 200" preserveAspectRatio="none"><rect width="200" height="200" fill="#48342a"/><use href="#wood"/><use href="#wood"/></svg>
<svg class="a" id="sw3" style="left:1112px;top:827px" width="200" height="200" viewBox="0 0 200 200"><rect width="200" height="200" fill="#5c5d61"/><use href="#wood"/></svg>
</body></html>
